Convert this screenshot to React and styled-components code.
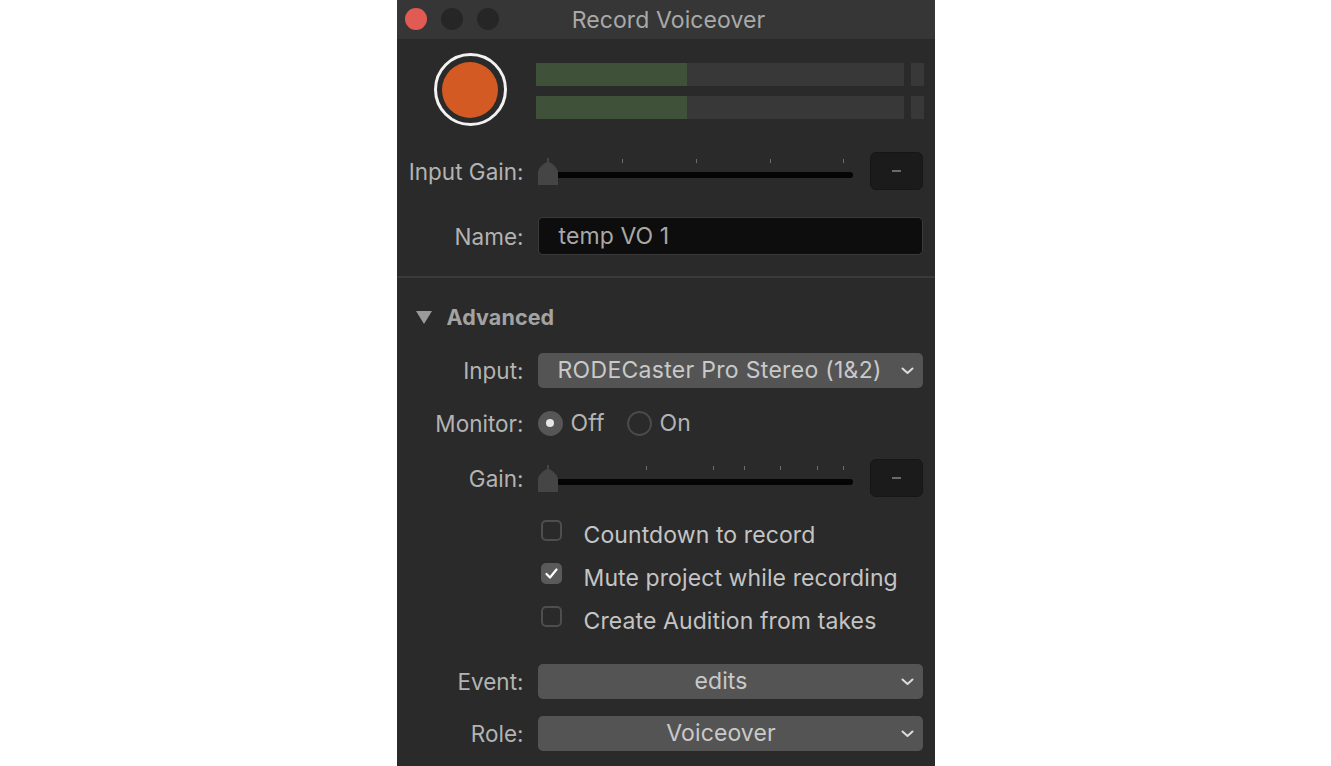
import React from 'react';
import styled, { createGlobalStyle } from 'styled-components';

const GlobalStyle = createGlobalStyle`
  html, body {
    margin: 0;
    padding: 0;
    background: #ffffff;
    height: 766px;
    overflow: hidden;
  }
  body {
    font-family: Inter, "Liberation Sans", sans-serif;
    -webkit-font-smoothing: antialiased;
  }
`;

const Window = styled.div`
  width: 538px;
  margin: 0 auto;
  height: 766px;
  background: #2a2a2a;
  color: #b3b3b3;
  font-size: 23px;
  letter-spacing: 0.1px;
  overflow: hidden;
`;

const TitleBar = styled.div`
  position: relative;
  height: 39px;
  background: #363636;
  display: flex;
  align-items: center;
  justify-content: center;

  .lights {
    position: absolute;
    left: 8px;
    top: 8px;
    display: flex;
    gap: 14px;
  }
  h1 {
    margin: 0 0 0 6px;
    font-size: 23px;
    font-weight: 400;
    color: #a9a9a9;
    letter-spacing: 0.1px;
  }
`;

const Light = styled.span`
  width: 22px;
  height: 22px;
  border-radius: 50%;
  background: ${p => (p.$close ? '#e25a54' : '#262626')};
`;

const TopPanel = styled.div`
  padding-bottom: 6px;
  border-bottom: 2px solid #3a3a3a;
`;

const MeterRow = styled.div`
  height: 101px;
  display: flex;
  align-items: center;
  padding: 0 11px 0 37px;
  gap: 29px;
`;

const RecordButton = styled.div`
  width: 73px;
  height: 73px;
  box-sizing: border-box;
  border: 3px solid #f2f2f2;
  border-radius: 50%;
  display: flex;
  align-items: center;
  justify-content: center;

  &::after {
    content: '';
    width: 56px;
    height: 56px;
    border-radius: 50%;
    background: #d35a22;
  }
`;

const Meters = styled.div`
  flex: 1;
  display: flex;
  flex-direction: column;
  gap: 10px;
  margin-top: 2px;
`;

const MeterLine = styled.div`
  display: flex;
  gap: 7px;
  height: 23px;
`;

const MeterBar = styled.div`
  flex: 1;
  background: #383838;
  position: relative;

  &::before {
    content: '';
    position: absolute;
    left: 0;
    top: 0;
    bottom: 0;
    width: ${p => p.$level}%;
    background: #3f5139;
  }
`;

const MeterPeak = styled.div`
  width: 13px;
  background: #383838;
`;

const FormRow = styled.div`
  display: grid;
  grid-template-columns: 127px 385px;
  column-gap: 14px;
  align-items: center;
  height: ${p => p.$h}px;
  margin-top: ${p => p.$mt || 0}px;
`;

const Label = styled.label`
  text-align: right;
  font-size: 22.5px;
  letter-spacing: 0;
  color: #b3b3b3;
  white-space: nowrap;
`;

const SliderLine = styled.div`
  display: flex;
  align-items: center;
  gap: 17px;
`;

const SliderBody = styled.div`
  position: relative;
  width: 315px;
  height: 27px;

  .track {
    position: absolute;
    left: 10px;
    right: 0;
    top: 14px;
    height: 6px;
    border-radius: 3px;
    background: #050505;
  }
  .thumb {
    position: absolute;
    left: 0;
    top: 0;
  }
`;

const Tick = styled.span`
  position: absolute;
  top: 1px;
  width: 1px;
  height: 4px;
  background: #6e6e6e;
`;

const SmallButton = styled.div`
  width: 53px;
  height: 38px;
  box-sizing: border-box;
  border-radius: 6px;
  background: #1b1b1b;
  border: 1px solid #161616;
  display: flex;
  align-items: center;
  justify-content: center;

  &::after {
    content: '';
    width: 9px;
    height: 2px;
    background: #6a6a6a;
  }
`;

const TextField = styled.div`
  height: 38px;
  box-sizing: border-box;
  border-radius: 5px;
  background: #0d0d0d;
  border: 1px solid #3a3a3a;
  padding-left: 20px;
  display: flex;
  align-items: center;
  color: #a8a8a8;
`;

const Advanced = styled.div`
  padding-top: 12px;
`;

const Disclosure = styled.div`
  height: 54px;
  display: flex;
  align-items: center;
  padding-left: 19px;
  gap: 15px;
  font-weight: 700;
  font-size: 21.5px;
  color: #a3a3a3;

  svg {
    display: block;
  }
`;

const Popup = styled.div`
  position: relative;
  height: 35px;
  box-sizing: border-box;
  border-radius: 5px;
  background: #545454;
  display: flex;
  align-items: center;
  color: #c9c9c9;
  justify-content: ${p => (p.$center ? 'center' : 'flex-start')};
  padding: ${p => (p.$center ? '0 36px 0 18px' : '0 0 0 20px')};
  letter-spacing: ${p => (p.$center ? '0.1px' : '0.3px')};

  svg {
    position: absolute;
    right: 9px;
    top: 14px;
  }
`;

const RadioGroup = styled.div`
  display: flex;
  align-items: center;
`;

const RadioOption = styled.span`
  display: flex;
  align-items: center;
  gap: 8px;
  margin-right: 22px;
`;

const RadioDot = styled.span`
  width: 25px;
  height: 25px;
  box-sizing: border-box;
  border-radius: 50%;
  border: 2px solid ${p => (p.$on ? '#565656' : '#4a4a4a')};
  background: ${p => (p.$on ? '#565656' : 'transparent')};
  display: flex;
  align-items: center;
  justify-content: center;

  &::after {
    content: '';
    display: ${p => (p.$on ? 'block' : 'none')};
    width: 8px;
    height: 8px;
    border-radius: 50%;
    background: #e6e6e6;
  }
`;

const CheckList = styled.div`
  margin-top: 7px;
`;

const CheckRow = styled.div`
  display: flex;
  align-items: center;
  height: 43px;
  padding-left: 144px;
  gap: 22px;
  color: #c4c4c4;
`;

const CheckBox = styled.span`
  width: 21px;
  height: 21px;
  box-sizing: border-box;
  border-radius: 5px;
  border: 2px solid ${p => (p.$checked ? '#5a5a5a' : '#4e4e4e')};
  background: ${p => (p.$checked ? '#5a5a5a' : 'transparent')};
  display: flex;
  align-items: center;
  justify-content: center;
  margin-top: -8px;
`;

function Chevron() {
  return (
    <svg width="13" height="8" viewBox="0 0 13 8">
      <path d="M1.5 1.5 L6.5 6 L11.5 1.5" fill="none" stroke="#dcdcdc" strokeWidth="2" strokeLinecap="round" strokeLinejoin="round" />
    </svg>
  );
}

function Slider({ ticks }) {
  return (
    <SliderBody>
      {ticks.map(t => (
        <Tick key={t} style={{ left: t }} />
      ))}
      <div className="track" />
      <svg className="thumb" width="20" height="27" viewBox="0 0 20 27">
        <path d="M9 0 H11 V4 C15 6 19 9 20 14 V27 H0 V14 C1 9 5 6 9 4 Z" fill="#454545" />
      </svg>
    </SliderBody>
  );
}

export default function App() {
  return (
    <>
      <GlobalStyle />
      <Window>
        <TitleBar>
          <div className="lights">
            <Light $close />
            <Light />
            <Light />
          </div>
          <h1>Record Voiceover</h1>
        </TitleBar>

        <TopPanel>
          <MeterRow>
            <RecordButton />
            <Meters>
              <MeterLine>
                <MeterBar $level={41.3} />
                <MeterPeak />
              </MeterLine>
              <MeterLine>
                <MeterBar $level={41.3} />
                <MeterPeak />
              </MeterLine>
            </Meters>
          </MeterRow>

          <FormRow $h={62}>
            <Label>Input Gain:</Label>
            <SliderLine>
              <Slider ticks={[10, 84, 158, 232, 305]} />
              <SmallButton />
            </SliderLine>
          </FormRow>

          <FormRow $h={68}>
            <Label>Name:</Label>
            <TextField>temp VO 1</TextField>
          </FormRow>
        </TopPanel>

        <Advanced>
          <Disclosure>
            <svg width="16" height="13" viewBox="0 0 16 13">
              <path d="M0 0 H16 L8 13 Z" fill="#9a9a9a" />
            </svg>
            Advanced
          </Disclosure>

          <FormRow $h={52}>
            <Label>Input:</Label>
            <Popup>
              RODECaster Pro Stereo (1&amp;2)
              <Chevron />
            </Popup>
          </FormRow>

          <FormRow $h={54}>
            <Label>Monitor:</Label>
            <RadioGroup>
              <RadioOption>
                <RadioDot $on />
                Off
              </RadioOption>
              <RadioOption>
                <RadioDot />
                On
              </RadioOption>
            </RadioGroup>
          </FormRow>

          <FormRow $h={56}>
            <Label>Gain:</Label>
            <SliderLine>
              <Slider ticks={[10, 108, 175, 206, 242, 279, 305]} />
              <SmallButton />
            </SliderLine>
          </FormRow>

          <CheckList>
            <CheckRow>
              <CheckBox />
              Countdown to record
            </CheckRow>
            <CheckRow>
              <CheckBox $checked>
                <svg width="13" height="11" viewBox="0 0 13 11">
                  <path d="M1.5 6 L5 9.5 L11.5 1.5" fill="none" stroke="#ffffff" strokeWidth="2.2" strokeLinecap="round" strokeLinejoin="round" />
                </svg>
              </CheckBox>
              Mute project while recording
            </CheckRow>
            <CheckRow>
              <CheckBox />
              Create Audition from takes
            </CheckRow>
          </CheckList>

          <FormRow $h={52} $mt={13}>
            <Label>Event:</Label>
            <Popup $center>
              edits
              <Chevron />
            </Popup>
          </FormRow>

          <FormRow $h={52}>
            <Label>Role:</Label>
            <Popup $center>
              Voiceover
              <Chevron />
            </Popup>
          </FormRow>
        </Advanced>
      </Window>
    </>
  );
}
